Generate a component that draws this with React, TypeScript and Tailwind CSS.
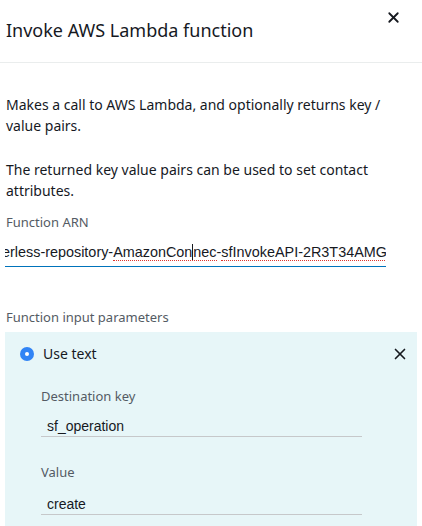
import { X } from "lucide-react";

export default function App() {
  return (
    <div className="h-[526px] w-[422px] overflow-hidden bg-white font-['Noto_Sans',sans-serif] text-[#16191f]">
      <header className="flex h-[63px] items-start justify-between border-b border-[#eaeded]">
        <h1 className="pl-[6px] pt-[18px] text-[18px] leading-[24px]">Invoke AWS Lambda function</h1>
        <button className="mr-[20px] mt-[9px] text-[#16191f]">
          <X size={17} strokeWidth={2.5} />
        </button>
      </header>

      <div className="px-[6px] pt-[31px] text-[14px] leading-[21px]">
        <p>Makes a call to AWS Lambda, and optionally returns key / value pairs.</p>
        <p className="mt-[23px] pr-[40px]">The returned key value pairs can be used to set contact attributes.</p>
      </div>

      <div className="px-[5px] pt-[11px]">
        <label className="block pl-[1px] text-[13px] leading-[20px] text-[#545b64]">Function ARN</label>
        <div className="mt-[9px] w-[381px] overflow-hidden border-b-[1.5px] border-[#0073bb] pb-[4px] font-['Liberation_Sans',sans-serif] text-[14.4px] leading-[20px] whitespace-nowrap text-[#16191f]">
          <span className="-ml-[3px]">erless-repository-</span>
          <span className="border-b-[1.5px] border-dotted border-[#e0332a]">
            AmazonCon
            <span className="inline-block h-[16px] w-px translate-y-[3px] bg-[#16191f]" />
            nec
          </span>
          -
          <span className="border-b-[1.5px] border-dotted border-[#e0332a]">sfInvokeAPI-2R3T34AMG</span>
        </div>
      </div>

      <div className="px-[5px] pt-[40px]">
        <label className="block pl-[1px] text-[13px] leading-[20px] text-[#545b64]">Function input parameters</label>
        <div className="mt-[5px] h-[200px] bg-[#e7f6f8] pt-[12px]">
          <div className="flex items-center justify-between pl-[15px] pr-[8px]">
            <div className="flex items-center gap-[9px]">
              <span className="flex h-[14px] w-[14px] items-center justify-center rounded-full bg-[#3184f5]">
                <span className="h-[4px] w-[4px] rounded-full bg-white" />
              </span>
              <span className="text-[14px] leading-[20px]">Use text</span>
            </div>
            <X size={18} strokeWidth={2.2} className="text-[#16191f]" />
          </div>

          <div className="pl-[36px] pt-[22px]">
            <label className="block text-[13px] leading-[20px] text-[#545b64]">Destination key</label>
            <div className="mt-[10px] w-[321px] border-b border-[#c6c8ca] pl-[6px] font-['Liberation_Sans',sans-serif] text-[14px] leading-[20px]">
              sf_operation
            </div>
            <label className="mt-[25px] block text-[13px] leading-[20px] text-[#545b64]">Value</label>
            <div className="mt-[12px] w-[321px] border-b border-[#c6c8ca] pl-[6px] font-['Liberation_Sans',sans-serif] text-[14px] leading-[20px]">
              create
            </div>
          </div>
        </div>
      </div>
    </div>
  );
}
